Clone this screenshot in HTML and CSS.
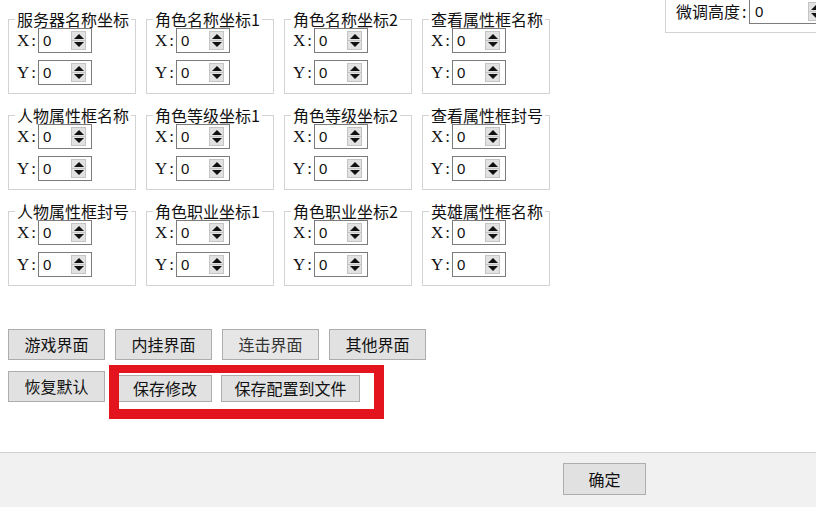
FILE: index.html
```html
<!DOCTYPE html>
<html lang="zh-CN">
<head>
<meta charset="utf-8">
<title>坐标设置</title>
<link rel="stylesheet" href="styles.css">
</head>
<body>
<div class="page">
  <div class="main">
    <div class="left">
      <div class="grid">
        <fieldset class="grp"><legend>服务器名称坐标</legend>
          <div class="rows">
            <div class="row"><span class="lbl">X<i>:</i></span><div class="spin"><span class="val">0</span><span class="arrows"></span></div></div>
            <div class="row"><span class="lbl">Y<i>:</i></span><div class="spin"><span class="val">0</span><span class="arrows"></span></div></div>
          </div>
        </fieldset>
        <fieldset class="grp"><legend>角色名称坐标1</legend>
          <div class="rows">
            <div class="row"><span class="lbl">X<i>:</i></span><div class="spin"><span class="val">0</span><span class="arrows"></span></div></div>
            <div class="row"><span class="lbl">Y<i>:</i></span><div class="spin"><span class="val">0</span><span class="arrows"></span></div></div>
          </div>
        </fieldset>
        <fieldset class="grp"><legend>角色名称坐标2</legend>
          <div class="rows">
            <div class="row"><span class="lbl">X<i>:</i></span><div class="spin"><span class="val">0</span><span class="arrows"></span></div></div>
            <div class="row"><span class="lbl">Y<i>:</i></span><div class="spin"><span class="val">0</span><span class="arrows"></span></div></div>
          </div>
        </fieldset>
        <fieldset class="grp"><legend>查看属性框名称</legend>
          <div class="rows">
            <div class="row"><span class="lbl">X<i>:</i></span><div class="spin"><span class="val">0</span><span class="arrows"></span></div></div>
            <div class="row"><span class="lbl">Y<i>:</i></span><div class="spin"><span class="val">0</span><span class="arrows"></span></div></div>
          </div>
        </fieldset>

        <fieldset class="grp"><legend>人物属性框名称</legend>
          <div class="rows">
            <div class="row"><span class="lbl">X<i>:</i></span><div class="spin"><span class="val">0</span><span class="arrows"></span></div></div>
            <div class="row"><span class="lbl">Y<i>:</i></span><div class="spin"><span class="val">0</span><span class="arrows"></span></div></div>
          </div>
        </fieldset>
        <fieldset class="grp"><legend>角色等级坐标1</legend>
          <div class="rows">
            <div class="row"><span class="lbl">X<i>:</i></span><div class="spin"><span class="val">0</span><span class="arrows"></span></div></div>
            <div class="row"><span class="lbl">Y<i>:</i></span><div class="spin"><span class="val">0</span><span class="arrows"></span></div></div>
          </div>
        </fieldset>
        <fieldset class="grp"><legend>角色等级坐标2</legend>
          <div class="rows">
            <div class="row"><span class="lbl">X<i>:</i></span><div class="spin"><span class="val">0</span><span class="arrows"></span></div></div>
            <div class="row"><span class="lbl">Y<i>:</i></span><div class="spin"><span class="val">0</span><span class="arrows"></span></div></div>
          </div>
        </fieldset>
        <fieldset class="grp"><legend>查看属性框封号</legend>
          <div class="rows">
            <div class="row"><span class="lbl">X<i>:</i></span><div class="spin"><span class="val">0</span><span class="arrows"></span></div></div>
            <div class="row"><span class="lbl">Y<i>:</i></span><div class="spin"><span class="val">0</span><span class="arrows"></span></div></div>
          </div>
        </fieldset>

        <fieldset class="grp"><legend>人物属性框封号</legend>
          <div class="rows">
            <div class="row"><span class="lbl">X<i>:</i></span><div class="spin"><span class="val">0</span><span class="arrows"></span></div></div>
            <div class="row"><span class="lbl">Y<i>:</i></span><div class="spin"><span class="val">0</span><span class="arrows"></span></div></div>
          </div>
        </fieldset>
        <fieldset class="grp"><legend>角色职业坐标1</legend>
          <div class="rows">
            <div class="row"><span class="lbl">X<i>:</i></span><div class="spin"><span class="val">0</span><span class="arrows"></span></div></div>
            <div class="row"><span class="lbl">Y<i>:</i></span><div class="spin"><span class="val">0</span><span class="arrows"></span></div></div>
          </div>
        </fieldset>
        <fieldset class="grp"><legend>角色职业坐标2</legend>
          <div class="rows">
            <div class="row"><span class="lbl">X<i>:</i></span><div class="spin"><span class="val">0</span><span class="arrows"></span></div></div>
            <div class="row"><span class="lbl">Y<i>:</i></span><div class="spin"><span class="val">0</span><span class="arrows"></span></div></div>
          </div>
        </fieldset>
        <fieldset class="grp"><legend>英雄属性框名称</legend>
          <div class="rows">
            <div class="row"><span class="lbl">X<i>:</i></span><div class="spin"><span class="val">0</span><span class="arrows"></span></div></div>
            <div class="row"><span class="lbl">Y<i>:</i></span><div class="spin"><span class="val">0</span><span class="arrows"></span></div></div>
          </div>
        </fieldset>
      </div>

      <div class="btns">
        <div class="btnrow">
          <button class="btn">游戏界面</button>
          <button class="btn">内挂界面</button>
          <button class="btn btn-dim">连击界面</button>
          <button class="btn">其他界面</button>
        </div>
        <div class="btnrow">
          <button class="btn">恢复默认</button>
          <div class="mark">
            <button class="btn btn-in btn-save">保存修改</button>
            <button class="btn btn-in btn-file">保存配置到文件</button>
          </div>
        </div>
      </div>
    </div>

    <div class="right">
      <fieldset class="tune">
        <div class="row">
          <span class="tlbl">微调高度<i>:</i></span>
          <div class="spin spin-wide"><span class="val">0</span><span class="arrows"></span></div>
        </div>
      </fieldset>
    </div>
  </div>

  <div class="footer">
    <button class="btn btn-ok">确定</button>
  </div>
</div>
</body>
</html>
```

FILE: styles.css
```css
html, body {
  margin: 0;
  padding: 0;
  background: #ffffff;
}

.page {
  width: 816px;
  height: 507px;
  overflow: hidden;
  display: flex;
  flex-direction: column;
  font-family: "Noto Sans CJK SC", "Noto Sans", sans-serif;
  color: #111;
}

.main {
  height: 452px;
  flex-shrink: 0;
  background: #ffffff;
  display: flex;
  align-items: flex-start;
}

.left {
  box-sizing: border-box;
  width: 550px;
  flex-shrink: 0;
  padding: 10px 0 0 8px;
}

.grid {
  display: grid;
  grid-template-columns: repeat(4, 128px);
  column-gap: 10px;
  row-gap: 12px;
}

.grp {
  box-sizing: border-box;
  width: 128px;
  margin: 0;
  padding: 0 4px 8px 6px;
  border: 1px solid #d3d3d3;
  min-width: 0;
}

.grp legend {
  padding: 0 2px;
  font-size: 16px;
  line-height: 18px;
  color: #111;
  white-space: nowrap;
}

.rows {
  display: flex;
  flex-direction: column;
  gap: 7px;
  padding-left: 2px;
}

.row {
  display: flex;
  align-items: center;
  height: 25px;
}

.lbl {
  width: 21px;
  flex-shrink: 0;
  font-family: "Liberation Serif", "DejaVu Serif", serif;
  font-size: 17px;
  line-height: 25px;
  color: #111;
}

.lbl i {
  font-style: normal;
  margin-left: 2px;
}

.tlbl i {
  font-style: normal;
  margin-left: 2px;
}

.spin {
  box-sizing: border-box;
  width: 54px;
  height: 25px;
  border: 1px solid #7c7c7c;
  background: #fff;
  display: flex;
  align-items: center;
  padding: 0 5px 0 4px;
}

.val {
  flex: 1;
  font-family: "Liberation Sans", Arial, sans-serif;
  font-size: 15px;
  line-height: 17px;
  color: #111;
}

.arrows {
  box-sizing: border-box;
  width: 15px;
  height: 19px;
  flex-shrink: 0;
  border: 1px solid #c4c4c4;
  background: linear-gradient(#e2e2e2 0 8px, #c4c4c4 8px 9px, #e2e2e2 9px);
  display: flex;
  flex-direction: column;
  align-items: center;
  justify-content: space-around;
}

.arrows::before {
  content: "";
  width: 0;
  height: 0;
  border-left: 5px solid transparent;
  border-right: 5px solid transparent;
  border-bottom: 5px solid #111;
}

.arrows::after {
  content: "";
  width: 0;
  height: 0;
  border-left: 5px solid transparent;
  border-right: 5px solid transparent;
  border-top: 5px solid #111;
}

/* buttons */
.btns {
  margin-top: 43px;
  display: flex;
  flex-direction: column;
  gap: 11px;
}

.btnrow {
  display: flex;
  align-items: flex-start;
  gap: 10px;
}

.btn {
  box-sizing: border-box;
  width: 97px;
  height: 31px;
  margin: 0;
  padding: 0;
  border: 1px solid #adadad;
  background: #e1e1e1;
  font-family: "Noto Sans CJK SC", "Noto Sans", sans-serif;
  font-size: 16px;
  line-height: 27px;
  color: #111;
  text-align: center;
}

.btn-dim {
  color: #333;
  background: #e6e6e6;
}

.mark {
  display: flex;
  align-items: flex-start;
  gap: 9px;
  margin-top: -6px;
  margin-left: -6px;
  padding: 2px 14px 7px 0;
  border-style: solid;
  border-color: #e3141e;
  border-width: 8px 10px 10px 10px;
  background: #fff;
}

.btn-in {
  height: 27px;
  line-height: 23px;
}

.btn-save {
  width: 93px;
  border-left: none;
}

.btn-file {
  width: 139px;
}

/* right tune box */
.right {
  margin-left: 115px;
  flex-shrink: 0;
}

.tune {
  box-sizing: border-box;
  width: 151px;
  margin: -5px 0 0 0;
  padding: 3px 0 8px 10px;
  border: 1px solid #d3d3d3;
  border-right: none;
  min-width: 0;
}

.tlbl {
  width: 73px;
  flex-shrink: 0;
  font-size: 16px;
  line-height: 23px;
  color: #111;
}

.spin-wide {
  width: 67px;
  padding: 0 0 0 5px;
  border-right: none;
  overflow: hidden;
}

.spin-wide .arrows {
  margin-right: -7px;
}

/* footer */
.footer {
  flex: 1;
  border-top: 1px solid #cfcfcf;
  background: #f1f1f1;
  padding: 10px 0 0 563px;
}

.btn-ok {
  width: 83px;
  height: 32px;
  line-height: 28px;
}
```
